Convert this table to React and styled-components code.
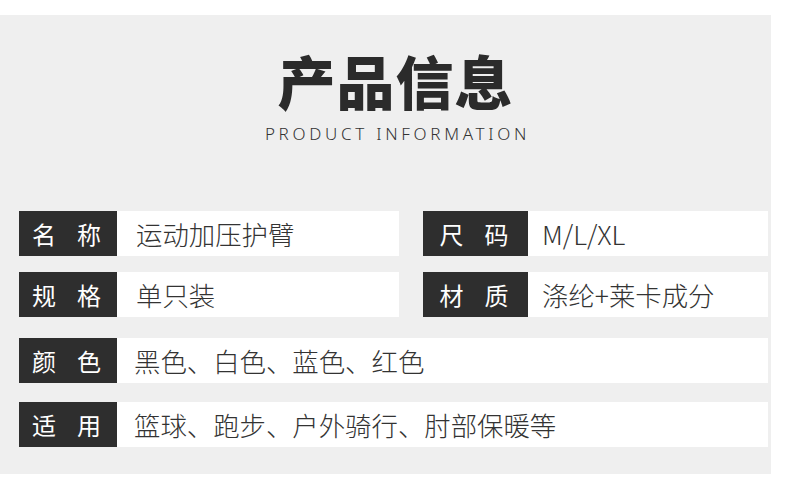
import React from "react";
import styled, { createGlobalStyle } from "styled-components";

const GlobalStyle = createGlobalStyle`
  html, body {
    margin: 0;
    padding: 0;
    background: #ffffff;
    font-family: "Noto Sans CJK SC", "Noto Sans", sans-serif;
  }
`;

const Panel = styled.div`
  margin-top: 15px;
  width: 771px;
  height: 459px;
  background: #efefef;
  box-sizing: border-box;
  padding-top: 33px;
`;

const Title = styled.h1`
  margin: 0;
  text-align: center;
  font-size: 58px;
  line-height: 64px;
  font-weight: 900;
  color: #2b2b2b;
  letter-spacing: 1px;
  padding-left: 20px;
`;

const Subtitle = styled.div`
  text-align: center;
  font-family: "Noto Sans", sans-serif;
  font-weight: 300;
  font-size: 17px;
  line-height: 20px;
  letter-spacing: 3.7px;
  color: #333;
  margin-top: 12px;
  padding-left: 24px;
`;

const Grid = styled.div`
  margin: 67px 0 0 19px;
  width: 749px;
  display: grid;
  grid-template-columns: 380px 345px;
  column-gap: 24px;
`;

const Row = styled.div`
  display: flex;
  height: 45px;
  grid-column: ${({ $full }) => ($full ? "1 / -1" : "auto")};
  margin-top: ${({ $top }) => $top || 0}px;
`;

const Label = styled.div`
  width: ${({ $w }) => $w}px;
  flex-shrink: 0;
  background: #2e2e2e;
  color: #fff;
  font-size: 24px;
  display: flex;
  align-items: center;
  justify-content: center;
  gap: 21px;
  padding-right: 3px;
  box-sizing: border-box;
  white-space: nowrap;
`;

const Value = styled.div`
  flex: 1;
  background: #fff;
  color: #333;
  font-size: 26.4px;
  font-weight: 300;
  display: flex;
  align-items: center;
  padding-left: ${({ $pad }) => $pad}px;
  white-space: nowrap;
`;

const Item = ({ label, w, pad, top, full, children }) => (
  <Row $top={top} $full={full}>
    <Label $w={w}>
      {label.split("").map((c) => (
        <span key={c}>{c}</span>
      ))}
    </Label>
    <Value $pad={pad}>{children}</Value>
  </Row>
);

export default function App() {
  return (
    <>
      <GlobalStyle />
      <Panel>
        <Title>产品信息</Title>
        <Subtitle>PRODUCT INFORMATION</Subtitle>
        <Grid>
          <Item label="名称" w={98} pad={19}>运动加压护臂</Item>
          <Item label="尺码" w={105} pad={14}>M/L/XL</Item>
          <Item label="规格" w={98} pad={19} top={16}>单只装</Item>
          <Item label="材质" w={105} pad={14} top={16}>涤纶+莱卡成分</Item>
          <Item label="颜色" w={98} pad={17} top={21} full>黑色、白色、蓝色、红色</Item>
          <Item label="适用" w={98} pad={17} top={19} full>篮球、跑步、户外骑行、肘部保暖等</Item>
        </Grid>
      </Panel>
    </>
  );
}
